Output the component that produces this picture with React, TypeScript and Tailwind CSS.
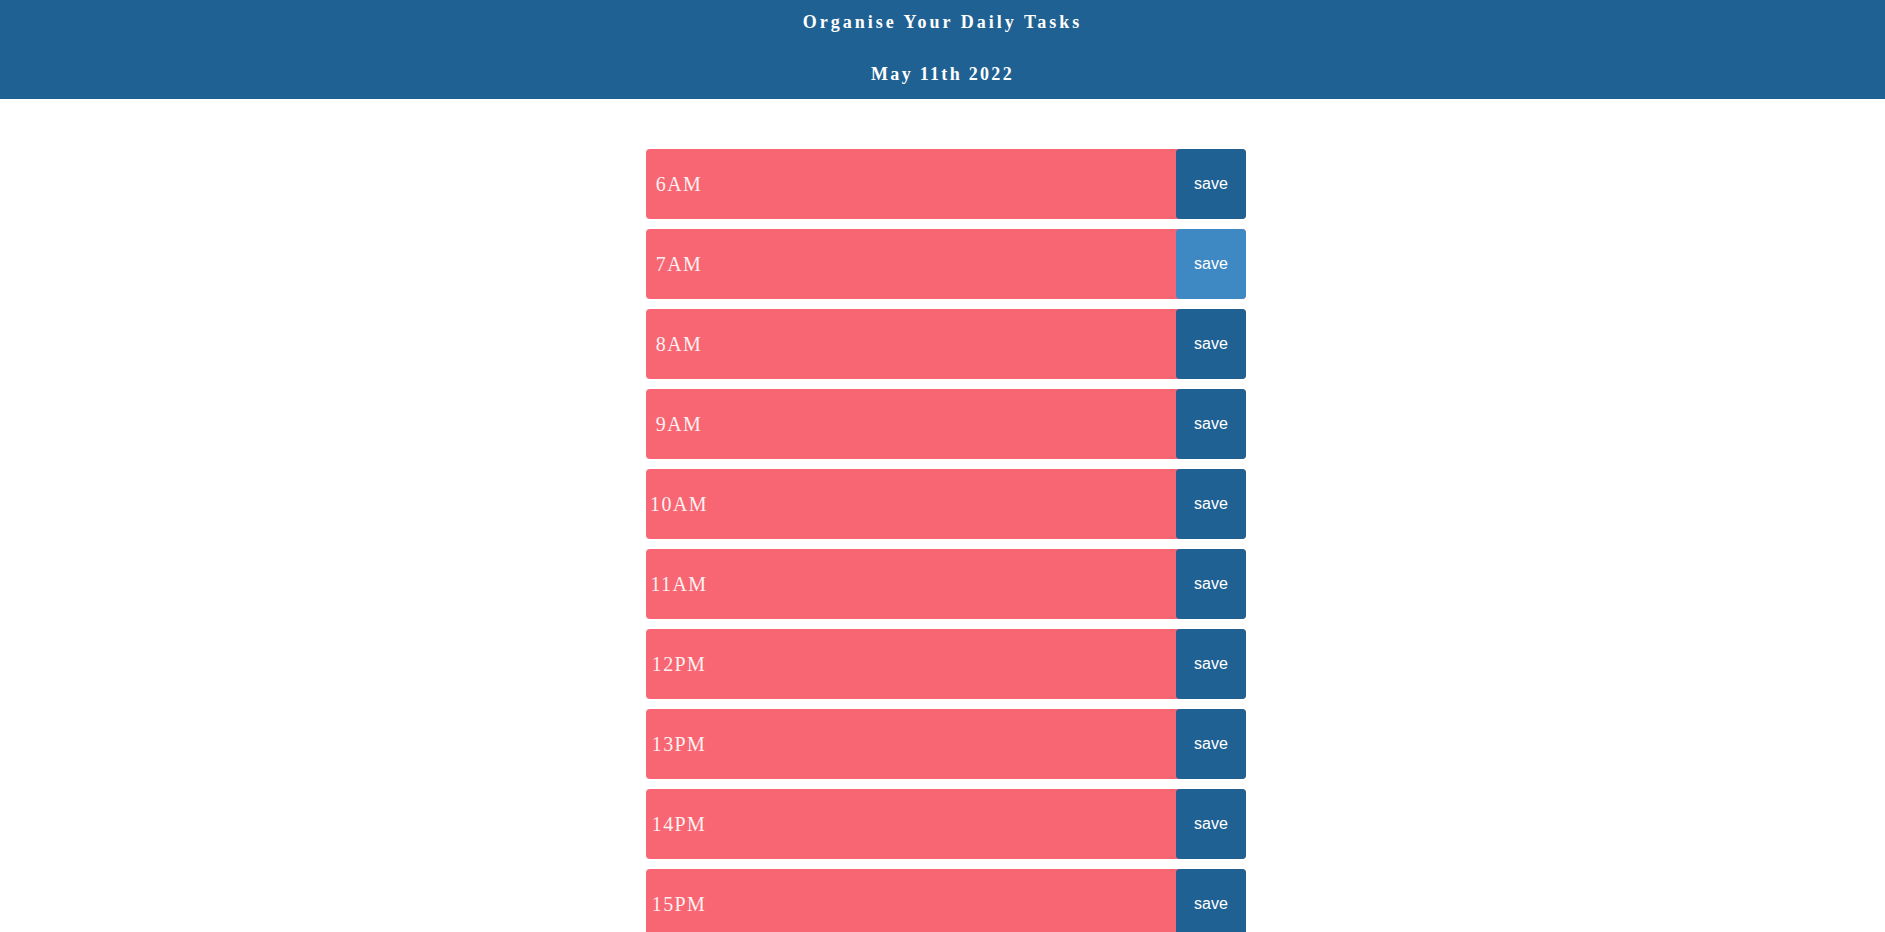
import React from 'react';

const hours = ['6AM', '7AM', '8AM', '9AM', '10AM', '11AM', '12PM', '13PM', '14PM', '15PM', '16PM', '17PM'];

const serif = { fontFamily: '"Liberation Serif", "Times New Roman", serif' };

const App = () => {
  return (
    <div className="min-h-screen bg-white">
      {/* Header */}
      <header className="h-[99px] bg-[#1f6192] text-center text-white font-bold" style={serif}>
        <h1 className="pt-[10px] text-[18px] leading-[24px] tracking-[3px]">Organise Your Daily Tasks</h1>
        <p className="mt-[28px] text-[18px] leading-[24px] tracking-[2.3px]">May 11th 2022</p>
      </header>

      {/* Time blocks */}
      <main className="flex justify-center pl-[7px] pt-[50px] pb-10">
        <div className="w-[600px] flex flex-col gap-[10px]">
          {hours.map((hour, i) => (
            <div key={hour} className="flex h-[70px] rounded-[4px] bg-[#f76672]">
              <div
                className="w-[66px] flex items-center justify-center text-[20px] tracking-[1.4px] text-[#fdf0f1]"
                style={serif}
              >
                {hour}
              </div>
              <div className="flex-1" />
              <button
                className={`w-[70px] rounded-[4px] text-[16px] text-white ${i === 1 ? 'bg-[#3e89c4]' : 'bg-[#1f6192]'}`}
                style={{ fontFamily: '"Liberation Sans", Arial, sans-serif' }}
              >
                save
              </button>
            </div>
          ))}
        </div>
      </main>
    </div>
  );
};

export default App;
